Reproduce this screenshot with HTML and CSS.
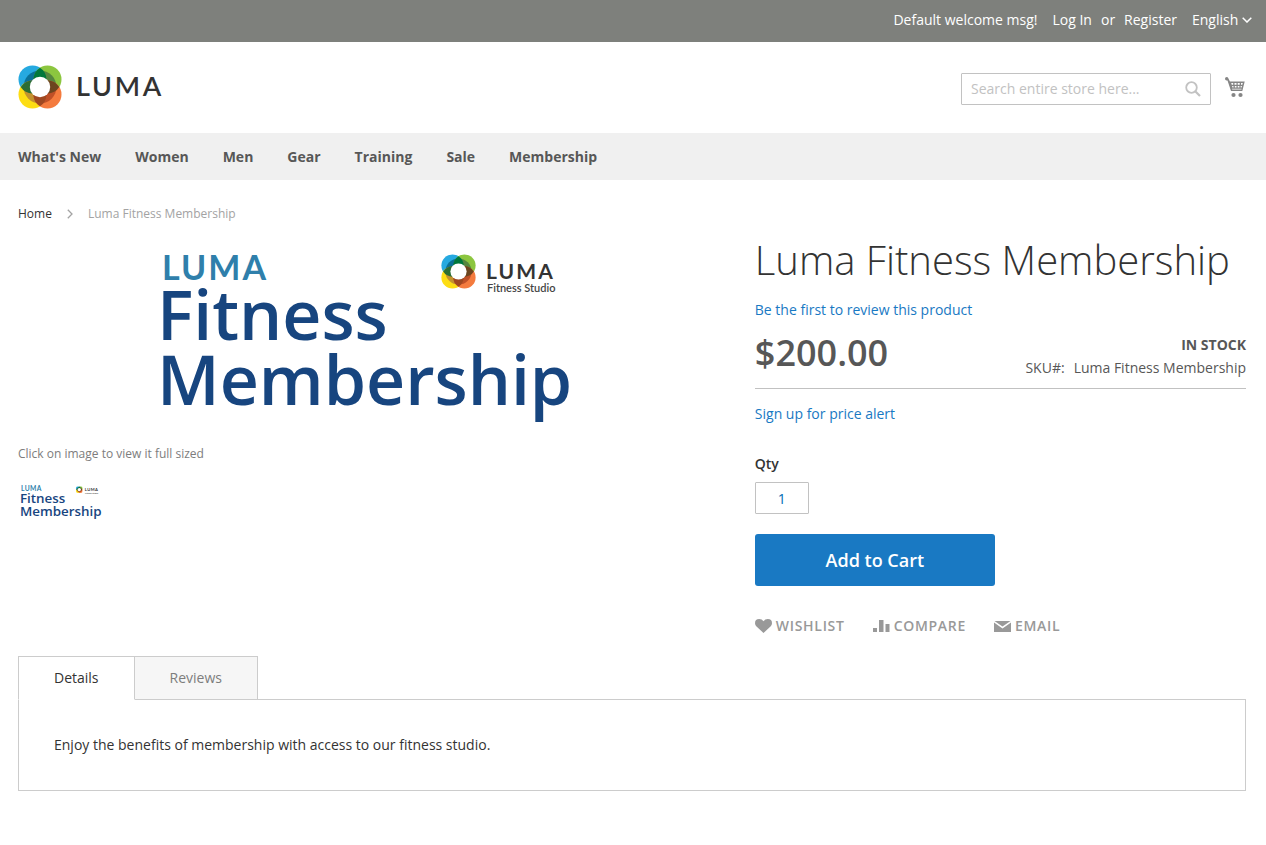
FILE: index.html
```html
<!DOCTYPE html>
<html lang="en">
<head>
<meta charset="utf-8">
<meta name="viewport" content="width=device-width, initial-scale=1">
<title>Luma Fitness Membership</title>
<link rel="stylesheet" href="styles.css">
</head>
<body>
<svg class="sprite" aria-hidden="true">
  <clipPath id="mark-ring"><circle cx="22" cy="22" r="16.500"/></clipPath>
  <symbol id="luma-mark" viewBox="0 0 44 44">
    <circle cx="14.500" cy="14.500" r="14" fill="#26a9e0"/>
    <circle cx="29.500" cy="14.500" r="14" fill="#8cc63f"/>
    <circle cx="14.500" cy="29.500" r="14" fill="#fddd14"/>
    <circle cx="29.500" cy="29.500" r="14" fill="#f47b3e"/>
    <g clip-path="url(#mark-ring)">
      <circle cx="14.500" cy="14.500" r="14" fill="#0a7197"/>
      <circle cx="29.500" cy="14.500" r="14" fill="#55863f"/>
      <circle cx="14.500" cy="29.500" r="14" fill="#c3922e"/>
      <circle cx="29.500" cy="29.500" r="14" fill="#bf5027"/>
    </g>
    <path d="M22 2.700A14 14 0 0 1 22 26.300 14 14 0 0 1 22 2.700z" fill="#00783c"/>
    <path d="M22 17.700A14 14 0 0 1 22 41.300 14 14 0 0 1 22 17.700z" fill="#9f4821"/>
    <path d="M2.700 22A14 14 0 0 1 26.300 22 14 14 0 0 1 2.700 22z" fill="#2b6d34"/>
    <path d="M17.700 22A14 14 0 0 1 41.300 22 14 14 0 0 1 17.700 22z" fill="#6c451f"/>
    <circle cx="22" cy="22" r="10.200" fill="#fff"/>
  </symbol>
</svg>

<header>
  <div class="panel">
    <span>Default welcome msg!</span>
    <nav class="account" aria-label="Account">
      <a href="#login">Log In</a><span>or</span><a href="#register">Register</a>
    </nav>
    <label class="language">
      <select aria-label="Language"><option>English</option></select>
      <svg width="10" height="6" viewBox="0 0 10 6" aria-hidden="true"><path d="M.7.7 5 5 9.300.7" fill="none" stroke="#fff" stroke-width="1.500"/></svg>
    </label>
  </div>
  <div class="masthead">
    <a class="logo" href="#home" aria-label="Luma">
      <svg width="160" height="44" viewBox="0 0 160 44"><use href="#luma-mark" width="44" height="44"/><text class="logo-text" x="58" y="31">LUMA</text></svg>
    </a>
    <form class="search" role="search">
      <input type="search" placeholder="Search entire store here..." aria-label="Search">
      <button type="button" aria-label="Search">
        <svg width="16" height="16" viewBox="0 0 16 16"><circle cx="6.500" cy="6.500" r="5.300" fill="none" stroke="#c2c2c2" stroke-width="1.800"/><path d="m10.500 10.500 4.500 4.500" stroke="#c2c2c2" stroke-width="2.200"/></svg>
      </button>
    </form>
    <a class="cart" href="#cart" aria-label="My Cart">
      <svg width="20" height="21" viewBox="0 0 20 21" fill="#858585"><path d="M0 1.700Q0 0 1.700 0 2.800 0 3.200 1L4.900 4.400H19.700L17.300 14H6L2.500 3.400H1.700Q0 3.400 0 1.700z"/><g fill="#fff"><path d="M6.200 6h2v1.800H6.700zM9.500 6h2v1.800h-2zM12.700 6h2v1.800h-2zM16 6h1.800l-.5 1.800H16zM7 9h1.500v1.500H7.500zM9.800 9h1.700v1.500H9.800zM12.700 9h1.700v1.500h-1.700zM15.600 9H17l-.4 1.500h-1z"/><path d="M7 11.700h9.500v.8H7.200z"/></g><circle cx="8.500" cy="18" r="2.100"/><circle cx="15.500" cy="18" r="2.100"/></svg>
    </a>
  </div>
  <nav class="main-nav" aria-label="Main">
    <a href="#new">What's New</a><a href="#women">Women</a><a href="#men">Men</a><a href="#gear">Gear</a><a href="#training">Training</a><a href="#sale">Sale</a><a href="#membership">Membership</a>
  </nav>
</header>

<main>
  <nav class="breadcrumbs" aria-label="Breadcrumbs">
    <a href="#home">Home</a>
    <svg width="6" height="10" viewBox="0 0 6 10" aria-hidden="true"><path d="M.8.8 5 5 .8 9.200" fill="none" stroke="#a3a3a3" stroke-width="1.300"/></svg>
    <span>Luma Fitness Membership</span>
  </nav>
  <div class="product">
    <section class="gallery" aria-label="Product image">
      <svg class="picture" viewBox="0 0 442 193">
        <text class="art-brand" x="15" y="42">LUMA</text>
        <text class="art-title" x="10" y="102">Fitness</text>
        <text class="art-title" x="10" y="167">Membership</text>
        <use href="#luma-mark" x="294" y="16" width="35" height="35"/>
        <text class="art-studio" x="339" y="41">LUMA</text>
        <text class="art-sub" x="340" y="54">Fitness Studio</text>
      </svg>
      <p class="note">Click on image to view it full sized</p>
      <button class="thumb" type="button" aria-label="Show image 1">
        <svg viewBox="0 0 442 193">
          <text class="art-brand" x="15" y="42">LUMA</text>
          <text class="art-title" x="10" y="102">Fitness</text>
          <text class="art-title" x="10" y="167">Membership</text>
          <use href="#luma-mark" x="294" y="16" width="35" height="35"/>
          <text class="art-studio" x="339" y="41">LUMA</text>
          <text class="art-sub" x="340" y="54">Fitness Studio</text>
        </svg>
      </button>
    </section>
    <section class="info">
      <h1>Luma Fitness Membership</h1>
      <a class="review" href="#reviews">Be the first to review this product</a>
      <div class="price-row">
        <span class="price">$200.00</span>
        <div class="stock"><strong>IN STOCK</strong><span class="sku"><span>SKU#:</span><span>Luma Fitness Membership</span></span></div>
      </div>
      <a class="alert" href="#alert">Sign up for price alert</a>
      <form class="buy">
        <label for="qty">Qty</label>
        <input id="qty" type="text" inputmode="numeric" value="1">
        <button type="button">Add to Cart</button>
      </form>
      <div class="links">
        <a href="#wishlist"><svg width="17" height="14" viewBox="0 0 17 14"><path d="M8.500 14 1.500 7.500Q0 6 0 4.200 0 0 4.200 0 7 0 8.500 2.300 10 0 12.800 0 17 0 17 4.200 17 6 15.500 7.500z"/></svg>WISHLIST</a>
        <a href="#compare"><svg width="17" height="14" viewBox="0 0 17 14"><path d="M0 9h4v4H0zM6 1h4.500v12H6zM12.500 5h4v8h-4z"/></svg>COMPARE</a>
        <a href="#email"><svg width="17" height="14" viewBox="0 0 17 14"><path d="M.5 2h16L8.500 7.500zM0 3.500l8.500 6 8.500-6V13H0z"/></svg>EMAIL</a>
      </div>
    </section>
  </div>
  <section class="tabs">
    <div class="tab-list" role="tablist">
      <button class="tab active" type="button" role="tab" id="tab-details" aria-selected="true" aria-controls="details">Details</button>
      <button class="tab" type="button" role="tab" aria-selected="false">Reviews</button>
    </div>
    <div class="tab-panel" role="tabpanel" id="details" aria-labelledby="tab-details">Enjoy the benefits of membership with access to our fitness studio.</div>
  </section>
</main>
</body>
</html>
```
FILE: styles.css
```css
* { box-sizing: border-box; }
body {
  margin: 0;
  background: #fff;
  color: #333;
  font: 14px/20px "Open Sans", "Noto Sans", sans-serif;
}
a { color: #1979c3; text-decoration: none; }
button, input, select { font: inherit; }
svg { display: block; flex: none; }
.sprite { position: absolute; width: 0; height: 0; }

.panel {
  display: flex;
  justify-content: flex-end;
  gap: 15px;
  padding: 10px 14px 12px 18px;
  background: #7e807c;
  color: #fff;
}
.account { display: flex; gap: 9px; }
.account a { color: #fff; }
.language { display: flex; align-items: center; gap: 3px; }
.language select {
  appearance: none;
  padding: 0;
  border: 0;
  background: transparent;
  color: #fff;
  line-height: 20px;
}

.masthead {
  display: flex;
  align-items: flex-start;
  gap: 14px;
  padding: 23px 21px 24px 18px;
}
.logo { margin-right: auto; }
.logo-text { font: 600 27px Lato, sans-serif; fill: #333; letter-spacing: .1em; }
.search {
  display: flex;
  align-items: center;
  width: 250px;
  height: 32px;
  margin-top: 8px;
  border: 1px solid #c2c2c2;
  border-radius: 1px;
}
.search input {
  flex: 1;
  min-width: 0;
  padding: 0 9px;
  border: 0;
  outline: 0;
  background: transparent;
}
.search input::placeholder { color: #c2c2c2; }
.search button { padding: 0 9px; border: 0; background: transparent; }
.cart { margin-top: 12px; }

.main-nav {
  display: flex;
  flex-wrap: wrap;
  gap: 0 34px;
  padding: 0 18px;
  background: #f0f0f0;
  font-weight: 700;
  line-height: 47px;
}
.main-nav a { color: #575757; }

main { padding: 26px 20px 40px 18px; }
.breadcrumbs {
  display: flex;
  align-items: center;
  gap: 15px;
  margin-bottom: 16px;
  font-size: 12px;
  line-height: 16px;
  color: #a3a3a3;
}
.breadcrumbs a { color: #333; }
.product { display: grid; grid-template-columns: 57% 40%; justify-content: space-between; }

.picture { width: 100%; max-width: 442px; margin: 0 auto; }
.art-brand { font: 700 34px Lato, sans-serif; fill: #2f7fab; letter-spacing: .06em; }
.art-title { font: 600 68px "Open Sans", sans-serif; fill: #17457f; }
.art-studio { font: 700 21px Lato, sans-serif; fill: #333; letter-spacing: .1em; }
.art-sub { font: 600 11px Lato, sans-serif; fill: #444; }
.note { margin: 15px 0 21px; font-size: 12px; line-height: 16px; color: #7d7d7d; }
.thumb { display: block; width: 87px; padding: 0; border: 0; background: transparent; }

h1 { margin: 0 0 18px; font-size: 40px; font-weight: 300; line-height: 44px; }
.review, .alert { display: block; }
.price-row {
  display: flex;
  justify-content: space-between;
  margin: 13px 0 15px;
  padding-bottom: 9px;
  border-bottom: 1px solid #c1c1c1;
  color: #575757;
}
.price { font-size: 36px; font-weight: 600; line-height: 40px; }
.stock { display: flex; flex-direction: column; align-items: flex-end; line-height: 23px; }
.sku { display: flex; gap: 9px; }
.buy { display: flex; flex-direction: column; align-items: flex-start; margin-top: 30px; }
.buy label { font-weight: 600; }
.buy input {
  width: 54px;
  height: 32px;
  margin: 8px 0 20px;
  padding: 0;
  border: 1px solid #c2c2c2;
  border-radius: 1px;
  text-align: center;
  color: #006bb4;
}
.buy button {
  width: 240px;
  max-width: 100%;
  height: 52px;
  border: 0;
  border-radius: 3px;
  background: #1979c3;
  color: #fff;
  font-size: 18px;
  font-weight: 600;
}
.links { display: flex; flex-wrap: wrap; gap: 28px; margin-top: 30px; font-weight: 600; }
.links a { display: flex; align-items: center; gap: 4px; color: #999; letter-spacing: .05em; }
.links svg { fill: #999; }

.tabs { margin-top: 20px; }
.tab-list { display: flex; }
.tab {
  height: 44px;
  margin: 0 -1px -1px 0;
  padding: 0 35px;
  border: 1px solid #ccc;
  background: #f6f6f6;
  color: #7d7d7d;
}
.tab.active { position: relative; border-bottom-color: #fff; background: #fff; color: #333; }
.tab-panel { padding: 35px; border: 1px solid #ccc; }
```
